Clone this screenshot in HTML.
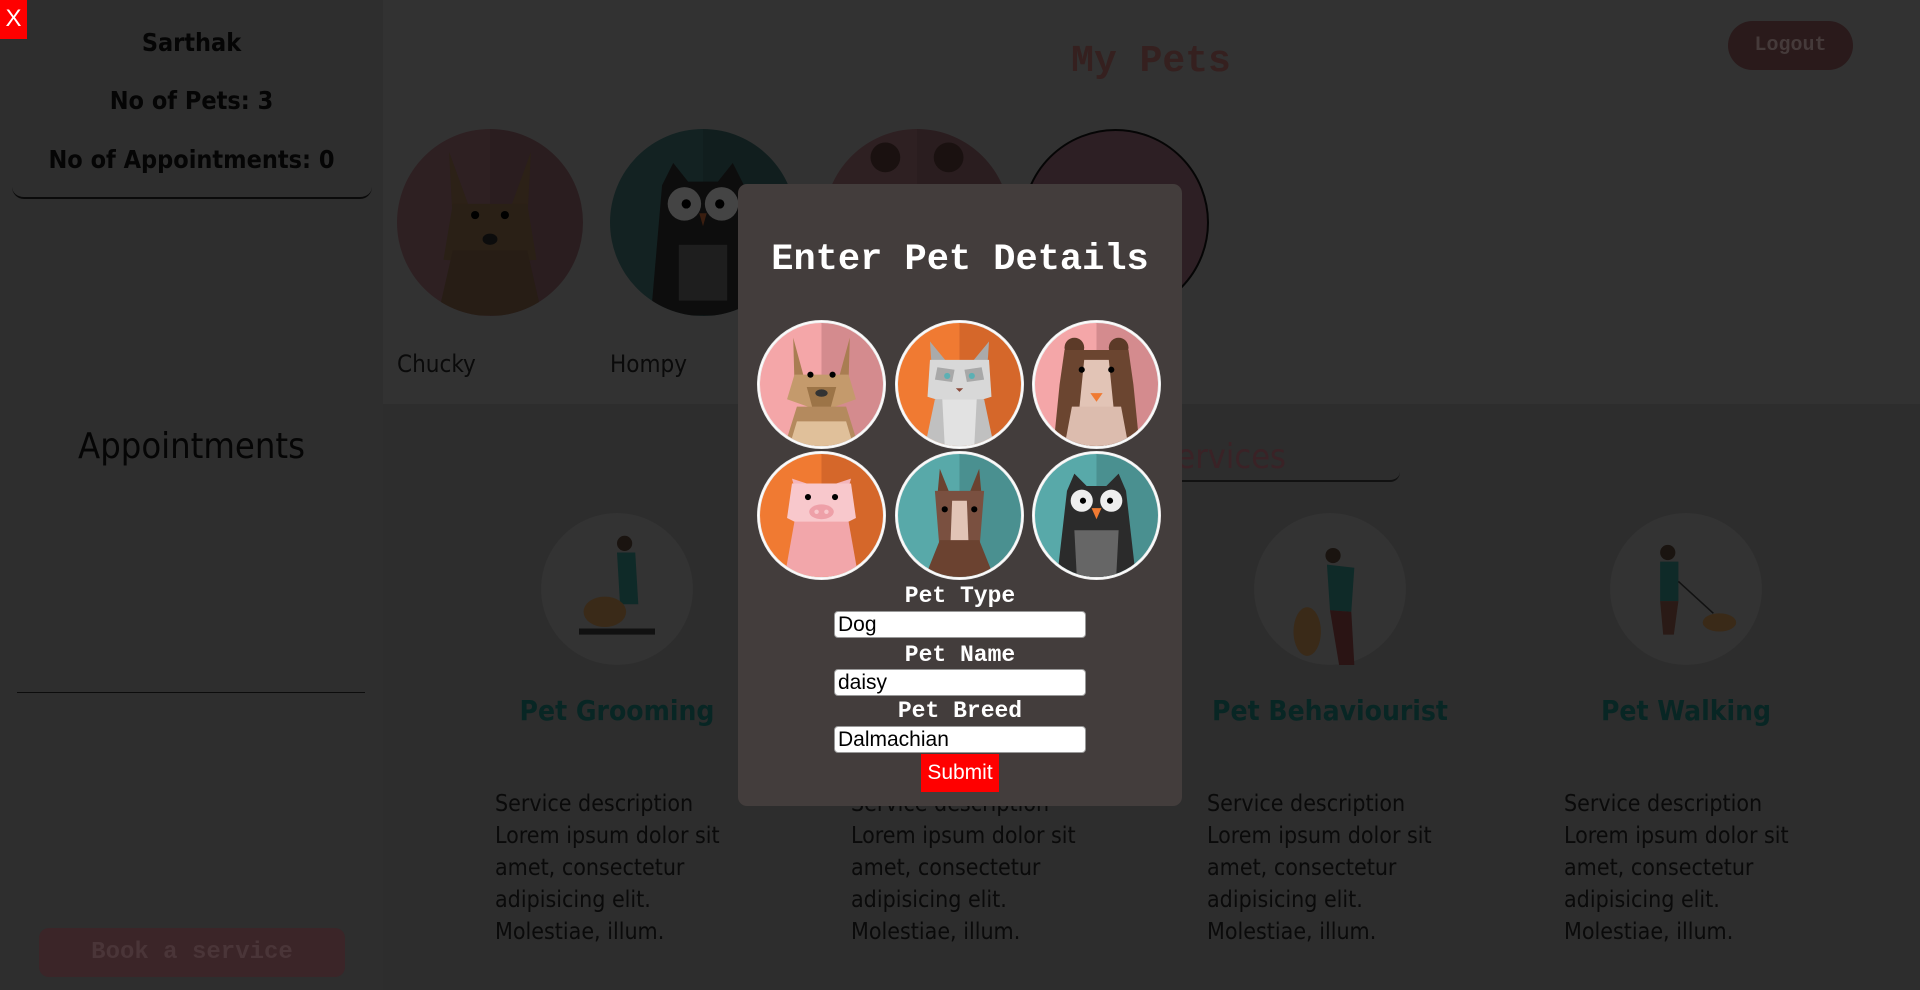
<!DOCTYPE html>
<html><head><meta charset="utf-8"><style>
*{margin:0;padding:0;box-sizing:border-box}
body{width:1920px;height:990px;overflow:hidden;background:#2d2d2d;font-family:"Liberation Sans",sans-serif;position:relative}
.abs{position:absolute}
.side{left:0;top:0;width:383px;height:990px;background:#2e2e2e}
.top{left:383px;top:0;width:1537px;height:404px;background:#323232}
.c{text-align:center}
.sb{font-weight:bold;font-size:25px;color:#050505;width:383px;left:0;font-family:"DejaVu Sans Condensed","Liberation Sans",sans-serif}
.pet{border-radius:50%;overflow:hidden}
.name{font-size:24px;color:#0a0a0a;font-family:"DejaVu Sans Condensed",sans-serif}
.scirc{width:152px;height:152px;border-radius:50%;background:#333}
.stitle{font-weight:bold;font-size:28px;color:#082624;width:300px;font-family:"DejaVu Sans Condensed",sans-serif}
.desc{font-size:23px;line-height:32px;color:#0a0a0a;width:260px;font-family:"DejaVu Sans Condensed",sans-serif}
.modal{left:738px;top:184px;width:444px;height:622px;background:#433d3c;border-radius:9px}
.mono{font-family:"Liberation Mono",monospace;font-weight:bold}
.an{width:129px;height:129px;border-radius:50%;border:3px double #eee;overflow:hidden;background:#fff}
.an svg{display:block;width:100%;height:100%}
.lab{color:#fff;font-size:23px;width:444px;left:0}
.inp{left:96px;width:252px;height:27px;background:#fff;border-radius:4px;border:1px solid #999;font-size:21px;color:#000;padding-left:3px;line-height:25px}
</style></head><body>
<div class="abs side"></div>
<div class="abs top"></div>
<div class="abs" style="left:0;top:0;width:27px;height:39px;background:#f00;color:#fff;font-size:24px;text-align:center;line-height:38px">X</div>
<div class="abs sb c" style="top:28px">Sarthak</div>
<div class="abs sb c" style="top:86px">No of Pets: 3</div>
<div class="abs sb c" style="top:145px">No of Appointments: 0</div>
<div class="abs" style="left:12px;top:160px;width:360px;height:39px;border-bottom:2px solid #0a0a0a;border-radius:0 0 12px 12px"></div>
<div class="abs c" style="left:0;width:383px;top:426px;font-size:36px;color:#050505;font-family:'DejaVu Sans Condensed',sans-serif">Appointments</div>
<div class="abs" style="left:17px;top:692px;width:348px;height:1px;background:#0c0c0c"></div>
<div class="abs mono c" style="left:39px;top:928px;width:306px;height:49px;border-radius:10px;background:#3b2528;color:#4a3538;font-size:24px;line-height:49px">Book a service</div>

<div class="abs mono c" style="left:951px;top:40px;width:400px;font-size:38px;color:#35201f">My Pets</div>
<div class="abs mono c" style="left:1728px;top:21px;width:125px;height:49px;border-radius:25px;background:#2a1a1b;color:#453a3a;font-size:20px;line-height:49px">Logout</div>

<div class="abs pet" style="left:397px;top:129px;width:186px;height:187px;background:linear-gradient(90deg,#2e2022 50%,#2a1d1f 50%)">
<svg viewBox="0 0 100 100" width="186" height="187"><path d="M28 12 L40 45 L30 50Z M72 12 L60 45 L70 50Z" fill="#2c2117"/><path d="M30 40 L70 40 L75 70 L50 72 L25 70Z" fill="#2a2016"/><path d="M22 100 L30 65 L70 65 L78 100Z" fill="#271d15"/><circle cx="42" cy="46" r="2.2" fill="#000"/><circle cx="58" cy="46" r="2.2" fill="#000"/><ellipse cx="50" cy="59" rx="4" ry="3" fill="#0c0c0c"/></svg></div>
<div class="abs pet" style="left:610px;top:129px;width:186px;height:187px;background:linear-gradient(90deg,#132222 50%,#111e1e 50%)">
<svg viewBox="0 0 100 100" width="186" height="187"><path d="M28 30 L34 18 L42 28 L58 28 L66 18 L72 30 L78 100 L22 100Z" fill="#0d0d0d"/><circle cx="40" cy="40" r="9" fill="#444"/><circle cx="60" cy="40" r="9" fill="#444"/><circle cx="41" cy="40" r="2.5" fill="#000"/><circle cx="59" cy="40" r="2.5" fill="#000"/><path d="M48 45 L52 45 L50 52Z" fill="#3a1e10"/><rect x="37" y="62" width="26" height="30" fill="#1e1e1e"/></svg></div>
<div class="abs pet" style="left:824px;top:129px;width:186px;height:187px;background:linear-gradient(90deg,#2e2022 50%,#2a1d1f 50%)">
<svg viewBox="0 0 100 100" width="186" height="187"><circle cx="33" cy="15" r="8" fill="#1a1110"/><circle cx="67" cy="15" r="8" fill="#1a1110"/></svg></div>
<div class="abs pet" style="left:1022px;top:129px;width:187px;height:187px;background:#2d1f24;border:2px solid #050505"></div>
<div class="abs name" style="left:397px;top:350px">Chucky</div>
<div class="abs name" style="left:610px;top:350px">Hompy</div>

<div class="abs" style="left:1040px;top:437px;width:246px;font-size:34px;color:#3a2226;text-align:right;font-family:'DejaVu Sans Condensed',sans-serif">Our Services</div>
<div class="abs" style="left:1000px;top:458px;width:400px;height:24px;border-bottom:2px solid #111;border-radius:0 0 10px 10px"></div>

<div class="abs scirc" style="left:541px;top:513px"><svg viewBox="0 0 100 100" width="152" height="152"><circle cx="55" cy="20" r="5" fill="#1a1410"/><path d="M50 26 L62 26 L64 60 L52 60Z" fill="#0f2a28"/><ellipse cx="42" cy="65" rx="14" ry="10" fill="#3a2a18"/><rect x="25" y="76" width="50" height="4" fill="#111"/></svg></div>
<div class="abs scirc" style="left:899px;top:513px"></div>
<div class="abs scirc" style="left:1254px;top:513px"><svg viewBox="0 0 100 100" width="152" height="152"><circle cx="52" cy="28" r="5" fill="#1a1410"/><path d="M48 34 L66 36 L64 65 L50 64Z" fill="#0f2a28"/><path d="M50 64 L64 65 L66 100 L56 100Z" fill="#2a1414"/><ellipse cx="35" cy="78" rx="9" ry="16" fill="#3a2a18"/></svg></div>
<div class="abs scirc" style="left:1610px;top:513px"><svg viewBox="0 0 100 100" width="152" height="152"><circle cx="38" cy="26" r="5" fill="#1a1410"/><path d="M33 32 L45 32 L45 58 L33 58Z" fill="#0f2a28"/><path d="M33 58 L45 58 L42 80 L35 80Z" fill="#2a1a16"/><ellipse cx="72" cy="72" rx="11" ry="6" fill="#3a2a18"/><path d="M45 45 L68 66" stroke="#111" stroke-width="1"/></svg></div>
<div class="abs stitle c" style="left:467px;top:694px">Pet Grooming</div>
<div class="abs stitle c" style="left:1180px;top:694px">Pet Behaviourist</div>
<div class="abs stitle c" style="left:1536px;top:694px">Pet Walking</div>
<div class="abs desc" style="left:495px;top:788px">Service description Lorem ipsum dolor sit amet, consectetur adipisicing elit. Molestiae, illum.</div>
<div class="abs desc" style="left:851px;top:788px">Service description Lorem ipsum dolor sit amet, consectetur adipisicing elit. Molestiae, illum.</div>
<div class="abs desc" style="left:1207px;top:788px">Service description Lorem ipsum dolor sit amet, consectetur adipisicing elit. Molestiae, illum.</div>
<div class="abs desc" style="left:1564px;top:788px">Service description Lorem ipsum dolor sit amet, consectetur adipisicing elit. Molestiae, illum.</div>

<div class="abs modal">
<div class="abs mono c" style="left:0;width:444px;top:55px;font-size:37px;color:#fff">Enter Pet Details</div>
<div class="abs an" style="left:19px;top:136px"><svg viewBox="0 0 100 100" preserveAspectRatio="none"><rect width="50" height="100" fill="#f4a6a8"/><rect x="50" width="50" height="100" fill="#d48b8e"/><path d="M27 12 L36 45 L28 48Z" fill="#a97d52"/><path d="M73 12 L64 45 L72 48Z" fill="#a97d52"/><path d="M28 42 L72 42 L78 62 L50 72 L22 62Z" fill="#c49a6c"/><path d="M38 52 L62 52 L56 74 L44 74Z" fill="#9c7447"/><path d="M20 100 L30 68 L70 68 L80 100Z" fill="#b48a5e"/><path d="M30 80 L70 80 L76 100 L24 100Z" fill="#e0c09a"/><circle cx="41" cy="42" r="2.5" fill="#000"/><circle cx="59" cy="42" r="2.5" fill="#000"/><ellipse cx="50" cy="57" rx="5" ry="3" fill="#333"/></svg></div>
<div class="abs an" style="left:157px;top:136px"><svg viewBox="0 0 100 100" preserveAspectRatio="none"><rect width="50" height="100" fill="#f07a32"/><rect x="50" width="50" height="100" fill="#d5672a"/><path d="M26 15 L40 32 L28 45Z" fill="#aaa"/><path d="M74 15 L60 32 L72 45Z" fill="#aaa"/><path d="M26 30 L74 30 L76 60 L50 68 L24 60Z" fill="#d8d8d8"/><path d="M32 36 L46 38 L44 48 L30 46Z M68 36 L54 38 L56 48 L70 46Z" fill="#a8a8a8"/><circle cx="40" cy="43" r="2.5" fill="#5cb0b4"/><circle cx="60" cy="43" r="2.5" fill="#5cb0b4"/><path d="M47 53 L53 53 L50 56Z" fill="#8a4a3a"/><path d="M22 100 L30 62 L70 62 L78 100Z" fill="#c0c0c0"/><path d="M36 62 L64 62 L62 100 L38 100Z" fill="#e2e2e2"/></svg></div>
<div class="abs an" style="left:294px;top:136px"><svg viewBox="0 0 100 100" preserveAspectRatio="none"><rect width="50" height="100" fill="#f4a6a8"/><rect x="50" width="50" height="100" fill="#d48b8e"/><circle cx="32" cy="20" r="8" fill="#5c3a28"/><circle cx="68" cy="20" r="8" fill="#5c3a28"/><path d="M24 22 L76 22 L80 50 L85 100 L15 100 L20 50Z" fill="#6b4530"/><path d="M40 30 L60 30 L64 70 L36 70Z" fill="#e2c4b6"/><path d="M30 68 L70 68 L76 100 L24 100Z" fill="#dcbcae"/><circle cx="38" cy="38" r="2.5" fill="#000"/><circle cx="62" cy="38" r="2.5" fill="#000"/><path d="M45 57 L55 57 L50 64Z" fill="#f07a32"/></svg></div>
<div class="abs an" style="left:19px;top:267px"><svg viewBox="0 0 100 100" preserveAspectRatio="none"><rect width="50" height="100" fill="#f07a32"/><rect x="50" width="50" height="100" fill="#d5672a"/><path d="M26 20 L38 24 L30 34Z M74 20 L62 24 L70 34Z" fill="#f4b6bc"/><path d="M26 24 L74 24 L78 52 L50 66 L22 52Z" fill="#f8c8cc"/><path d="M20 100 L28 55 L72 55 L80 100Z" fill="#f2a6aa"/><ellipse cx="50" cy="47" rx="10" ry="6" fill="#eea0a8"/><circle cx="46" cy="47" r="1.8" fill="#f8c8cc"/><circle cx="54" cy="47" r="1.8" fill="#f8c8cc"/><circle cx="39" cy="35" r="2.5" fill="#000"/><circle cx="61" cy="35" r="2.5" fill="#000"/></svg></div>
<div class="abs an" style="left:157px;top:267px"><svg viewBox="0 0 100 100" preserveAspectRatio="none"><rect width="50" height="100" fill="#58a9a9"/><rect x="50" width="50" height="100" fill="#4a9090"/><path d="M34 12 L42 32 L32 34Z M66 12 L58 32 L68 34Z" fill="#6b4230"/><path d="M30 30 L70 30 L66 80 L34 80Z" fill="#7a5040"/><path d="M44 38 L56 38 L58 90 L42 90Z" fill="#e2c4b6"/><path d="M22 100 L34 70 L66 70 L78 100Z" fill="#6b4230"/><circle cx="38" cy="45" r="2.5" fill="#000"/><circle cx="62" cy="45" r="2.5" fill="#000"/></svg></div>
<div class="abs an" style="left:294px;top:267px"><svg viewBox="0 0 100 100" preserveAspectRatio="none"><rect width="50" height="100" fill="#58a9a9"/><rect x="50" width="50" height="100" fill="#4a9090"/><path d="M26 30 L32 16 L42 26 L58 26 L68 16 L74 30 L82 100 L18 100Z" fill="#2b2b2b"/><circle cx="38" cy="38" r="9" fill="#eee"/><circle cx="62" cy="38" r="9" fill="#eee"/><circle cx="39" cy="38" r="2.5" fill="#000"/><circle cx="61" cy="38" r="2.5" fill="#000"/><path d="M46 44 L54 44 L50 53Z" fill="#f07a32"/><path d="M32 62 L68 62 L66 100 L34 100Z" fill="#666"/></svg></div>
<div class="abs mono c lab" style="top:399px">Pet Type</div>
<div class="abs inp" style="top:427px">Dog</div>
<div class="abs mono c lab" style="top:458px">Pet Name</div>
<div class="abs inp" style="top:485px">daisy</div>
<div class="abs mono c lab" style="top:514px">Pet Breed</div>
<div class="abs inp" style="top:542px">Dalmachian</div>
<div class="abs c" style="left:183px;top:570px;width:78px;height:38px;background:#f00;color:#fff;font-size:21px;line-height:38px">Submit</div>
</div>
</body></html>
